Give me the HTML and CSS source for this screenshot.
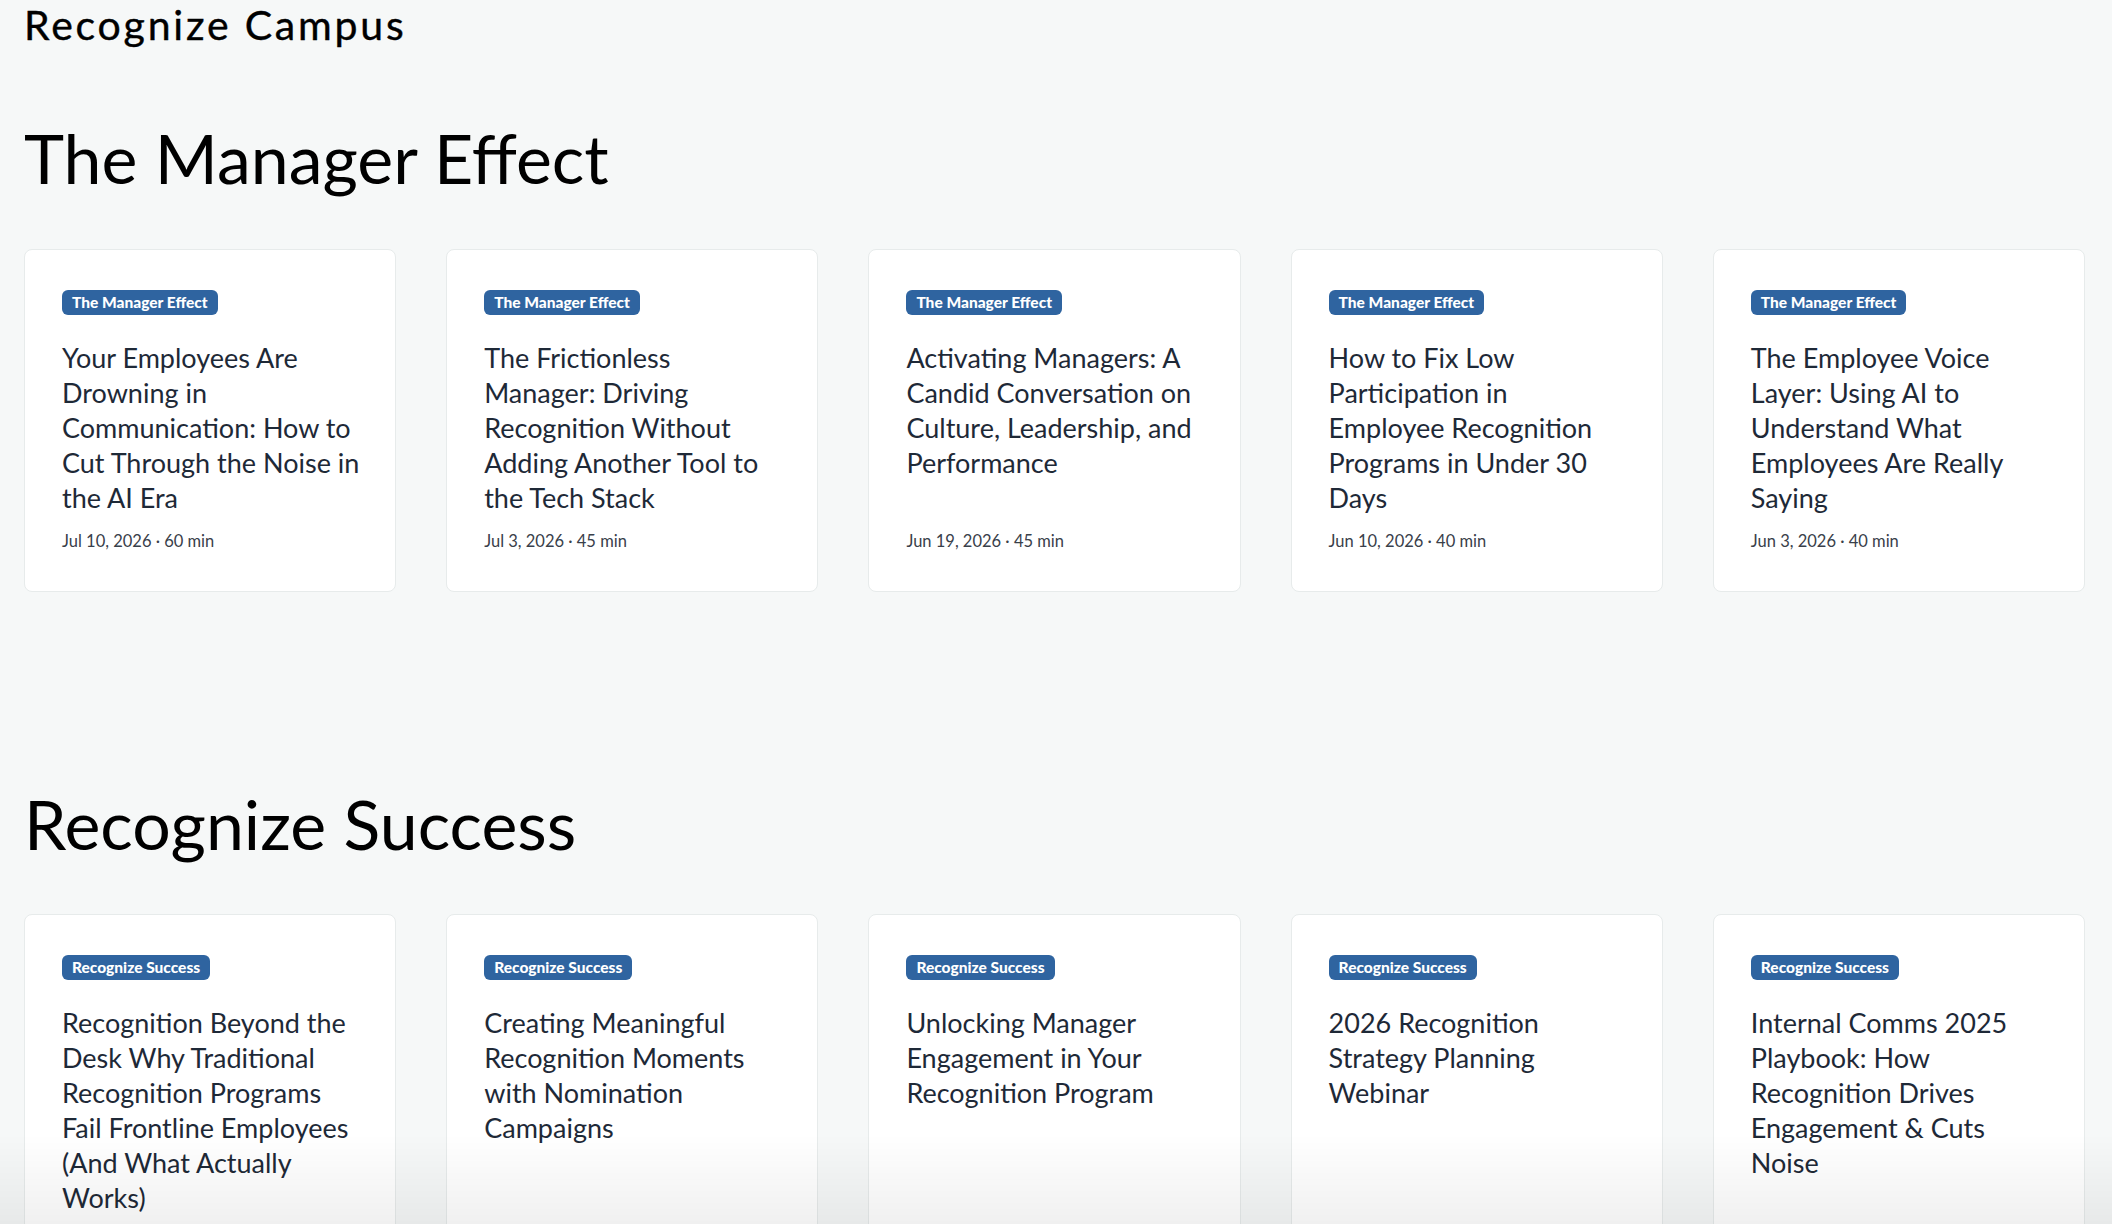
FILE: index.html
```html
<!DOCTYPE html>
<html lang="en">
<head>
    <meta charset="UTF-8">
    <meta name="viewport" content="width=device-width, initial-scale=1.0">
    <title>Recognize Campus</title>
    <link rel="stylesheet" href="styles.css">
</head>
<body>
    <div class="page">
        <div class="brand">Recognize Campus</div>

        <section class="series">
            <h2>The Manager Effect</h2>
            <div class="grid">
                <a class="card" href="#">
                    <span class="tag">The Manager Effect</span>
                    <h3>Your Employees Are Drowning in Communication: How to Cut Through the Noise in the AI Era</h3>
                    <div class="meta">Jul 10, 2026 · 60 min</div>
                </a>
                <a class="card" href="#">
                    <span class="tag">The Manager Effect</span>
                    <h3>The Frictionless Manager: Driving Recognition Without Adding Another Tool to the Tech Stack</h3>
                    <div class="meta">Jul 3, 2026 · 45 min</div>
                </a>
                <a class="card" href="#">
                    <span class="tag">The Manager Effect</span>
                    <h3>Activating Managers: A Candid Conversation on Culture, Leadership, and Performance</h3>
                    <div class="meta">Jun 19, 2026 · 45 min</div>
                </a>
                <a class="card" href="#">
                    <span class="tag">The Manager Effect</span>
                    <h3>How to Fix Low Participation in Employee Recognition Programs in Under 30 Days</h3>
                    <div class="meta">Jun 10, 2026 · 40 min</div>
                </a>
                <a class="card" href="#">
                    <span class="tag">The Manager Effect</span>
                    <h3>The Employee Voice Layer: Using AI to Understand What Employees Are Really Saying</h3>
                    <div class="meta">Jun 3, 2026 · 40 min</div>
                </a>
            </div>
        </section>

        <section class="series">
            <h2>Recognize Success</h2>
            <div class="grid">
                <a class="card" href="#">
                    <span class="tag">Recognize Success</span>
                    <h3>Recognition Beyond the Desk Why Traditional Recognition Programs Fail Frontline Employees (And What Actually Works)</h3>
                </a>
                <a class="card" href="#">
                    <span class="tag">Recognize Success</span>
                    <h3>Creating Meaningful Recognition Moments with Nomination Campaigns</h3>
                </a>
                <a class="card" href="#">
                    <span class="tag">Recognize Success</span>
                    <h3>Unlocking Manager Engagement in Your Recognition Program</h3>
                </a>
                <a class="card" href="#">
                    <span class="tag">Recognize Success</span>
                    <h3>2026 Recognition Strategy Planning Webinar</h3>
                </a>
                <a class="card" href="#">
                    <span class="tag">Recognize Success</span>
                    <h3>Internal Comms 2025 Playbook: How Recognition Drives Engagement &amp; Cuts Noise</h3>
                </a>
            </div>
        </section>
    </div>

    <div class="fade"></div>
</body>
</html>
```

FILE: styles.css
```css
body {
    margin: 0;
    background-color: #f6f8f8;
    color: #000;
    font-family: Lato, "Open Sans", sans-serif;
}

.page {
    padding: 0 27px 80px 24px;
}

.brand {
    font-size: 41px;
    line-height: 1.2;
    font-weight: 400;
    letter-spacing: 2.8px;
    -webkit-text-stroke: 0.4px #000;
}

.series h2 {
    margin: 68px 0 50px;
    font-size: 68px;
    line-height: 1.2;
    font-weight: 400;
}

.series + .series h2 {
    margin-top: 191px;
}

.grid {
    display: grid;
    grid-template-columns: repeat(5, 1fr);
    gap: 50px;
}

.card {
    display: flex;
    flex-direction: column;
    align-items: flex-start;
    padding: 40px 34px 38px 37px;
    background-color: #fff;
    border: 1px solid #e7ebeb;
    border-radius: 8px;
    color: inherit;
    text-decoration: none;
}

.tag {
    padding: 4px 10px;
    background-color: #2f64a0;
    color: #fff;
    border-radius: 6px;
    font-size: 15.5px;
    line-height: 17px;
    font-weight: 900;
}

.card h3 {
    margin: 25px 0 14px;
    font-size: 27px;
    line-height: 35px;
    font-weight: 400;
    color: #1e2937;
}

.meta {
    margin-top: auto;
    font-size: 16.5px;
    line-height: 24px;
    color: #39404a;
}

/* soft shade at the bottom edge of the window */
.fade {
    position: fixed;
    left: 0;
    right: 0;
    bottom: 0;
    height: 90px;
    background: linear-gradient(to bottom, rgba(0, 0, 0, 0), rgba(0, 0, 0, 0.06));
    pointer-events: none;
}
```
